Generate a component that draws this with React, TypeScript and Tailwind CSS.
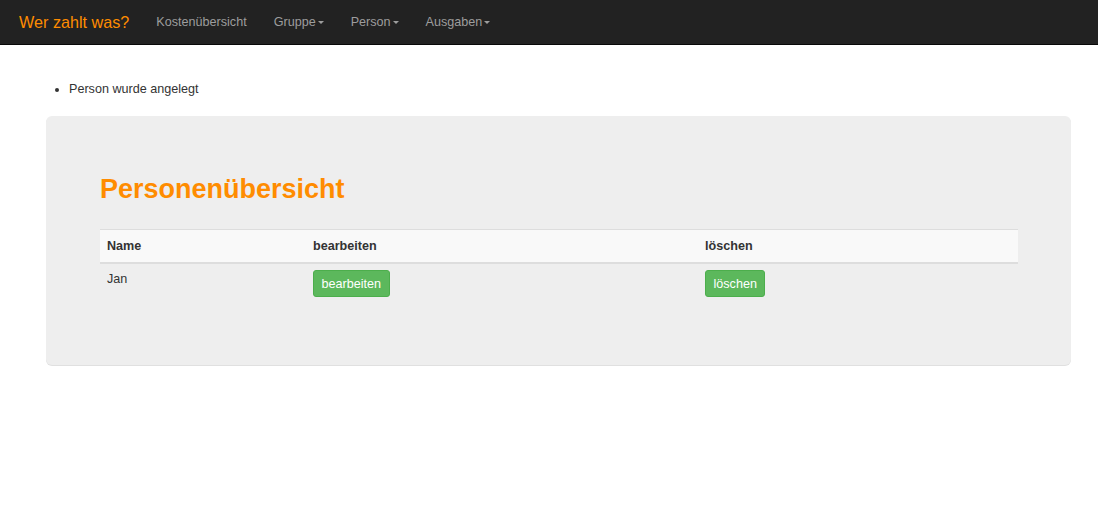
import React from 'react';

function Caret() {
  return (
    <span className="inline-block ml-[2px] mt-[1px] w-0 h-0 align-middle border-t-[3.6px] border-t-current border-x-[3.6px] border-x-transparent" />
  );
}

const navItems = [
  { label: 'Kostenübersicht', dropdown: false },
  { label: 'Gruppe', dropdown: true },
  { label: 'Person', dropdown: true },
  { label: 'Ausgaben', dropdown: true },
];

const persons = [{ name: 'Jan' }];

export default function App() {
  return (
    <div className="min-h-screen bg-white font-['Liberation_Sans',Arial,sans-serif] text-[12.6px] leading-[18px] text-[#333]">
      <nav className="h-[45px] bg-[#222] border-b border-[#080808] flex items-center">
        <a href="#" className="pl-[19px] pr-[13.5px] text-[16.2px] text-[#ff8c00]">
          Wer zahlt was?
        </a>
        {navItems.map((item) => (
          <a key={item.label} href="#" className="px-[13.5px] text-[#9d9d9d] flex items-center">
            {item.label}
            {item.dropdown && <Caret />}
          </a>
        ))}
      </nav>

      <ul className="list-disc mt-[35px] ml-[29px] pl-[40px]">
        <li>Person wurde angelegt</li>
      </ul>

      <div className="mt-[18px] ml-[46px] mr-[27px] bg-[#eee] rounded-[6px] shadow-[0_1px_0_#e0e0e0] pt-[58px] pb-[59px] pl-[54px] pr-[53px]">
        <h1 className="text-[27px] leading-[30px] font-bold text-[#ff8c00]">Personenübersicht</h1>
        <table className="w-full mt-[25px] border-collapse">
          <thead>
            <tr className="bg-[#f9f9f9] border-t border-[#ddd]">
              <th className="w-[205px] text-left font-bold px-[7px] py-[7px] border-b-2 border-[#ddd]">Name</th>
              <th className="w-[392px] text-left font-bold px-[8px] py-[7px] border-b-2 border-[#ddd]">bearbeiten</th>
              <th className="text-left font-bold px-[8px] py-[7px] border-b-2 border-[#ddd]">löschen</th>
            </tr>
          </thead>
          <tbody>
            {persons.map((p) => (
              <tr key={p.name}>
                <td className="align-top px-[7px] pt-[6px] pb-[9px]">{p.name}</td>
                <td className="align-top px-[8px] pt-[6px] pb-[9px]">
                  <button type="button" className="bg-[#5cb85c] text-white rounded-[3px] px-[7.5px] py-[3.5px] border border-[#4cae4c]">
                    bearbeiten
                  </button>
                </td>
                <td className="align-top px-[8px] pt-[6px] pb-[9px]">
                  <button type="button" className="bg-[#5cb85c] text-white rounded-[3px] px-[7.5px] py-[3.5px] border border-[#4cae4c]">
                    löschen
                  </button>
                </td>
              </tr>
            ))}
          </tbody>
        </table>
      </div>
    </div>
  );
}
